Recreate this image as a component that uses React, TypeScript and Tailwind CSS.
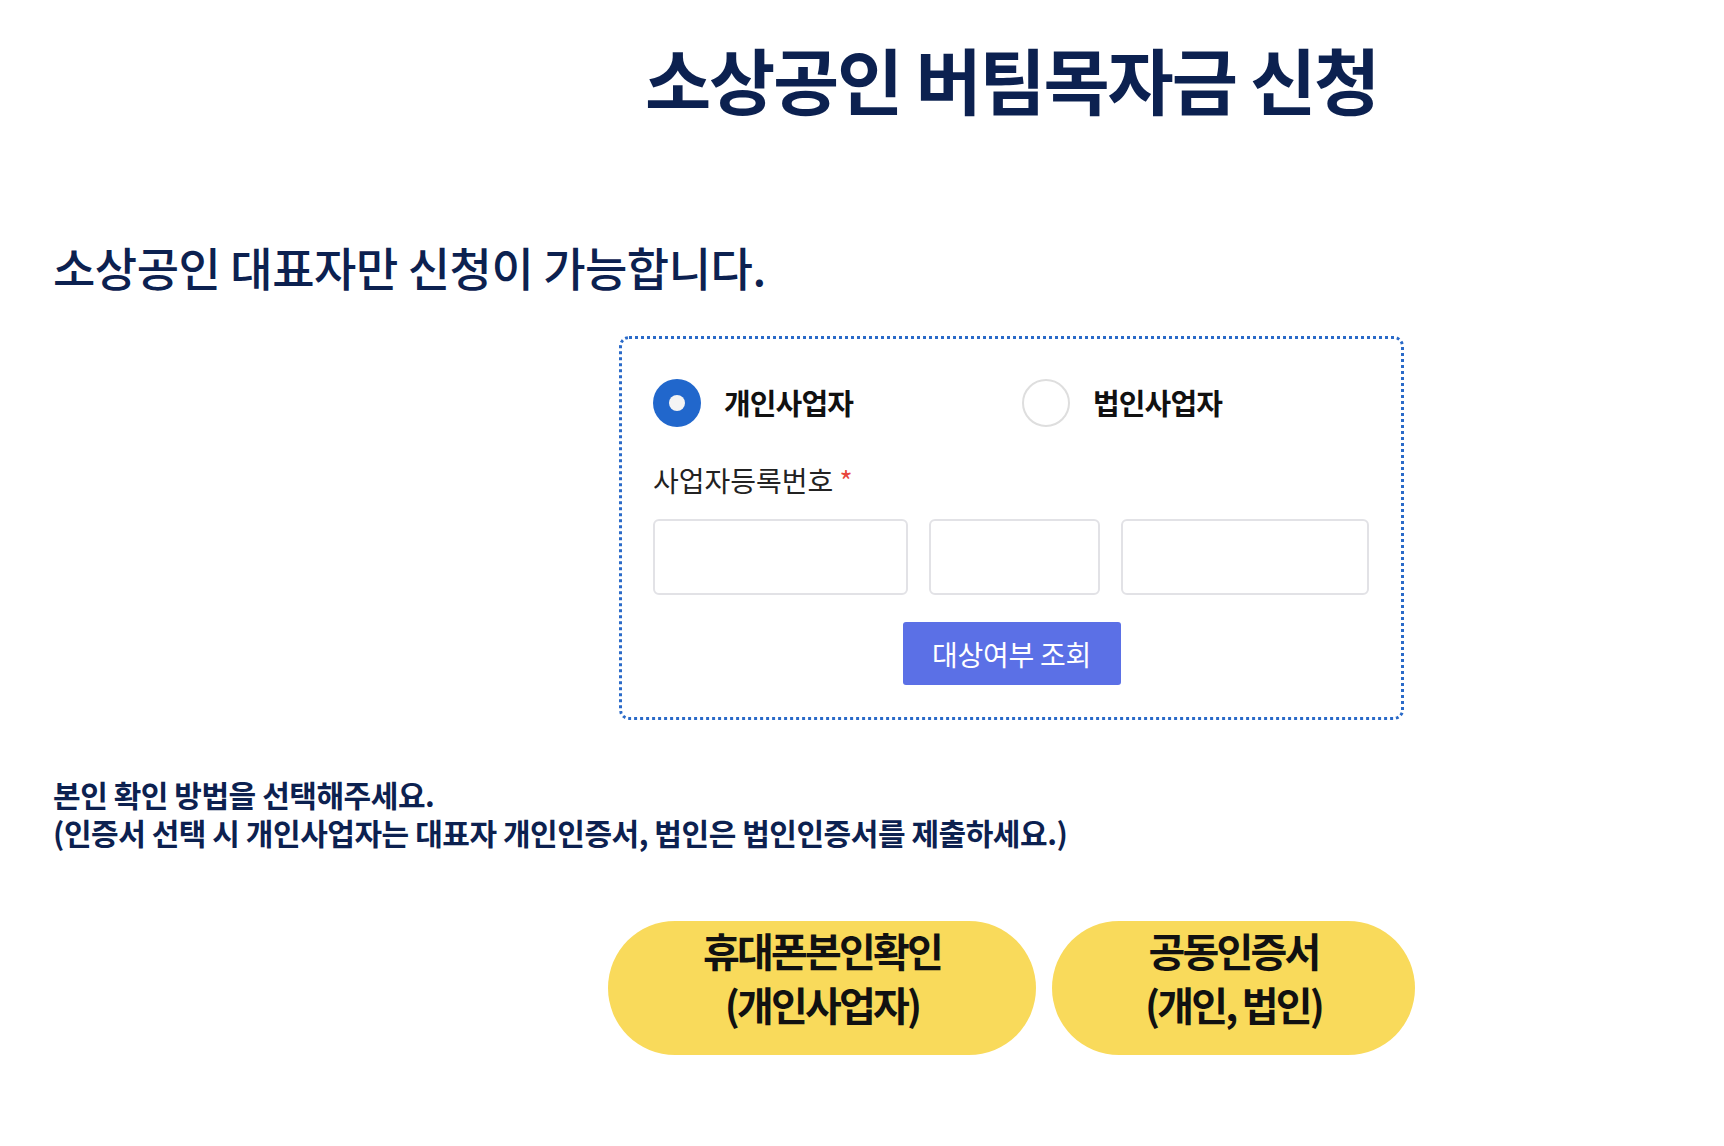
import React, { useState } from 'react';

const font = { fontFamily: '"Noto Sans CJK KR", "Noto Sans", sans-serif' };

const App: React.FC = () => {
  const [type, setType] = useState<'personal' | 'corp'>('personal');

  return (
    <div className="min-h-screen bg-white text-[#0c2150] pl-[53px]" style={font}>
      <div className="ml-[555px] w-[807px] pt-[38px]">
        <h1 className="text-center text-[72px] leading-[80px] font-bold tracking-[-0.03em]">
          소상공인 버팀목자금 신청
        </h1>
      </div>

      <p className="mt-[120px] text-[46px] leading-[56px] font-medium tracking-[-0.01em]">
        소상공인 대표자만 신청이 가능합니다.
      </p>

      <div className="ml-[566px] mt-[42px] w-[785px] rounded-[10px] border-[3px] border-dotted border-[#2a6ac8] px-[31px] pt-[40px] pb-[32px]">
        <div className="flex items-center">
          <button
            type="button"
            onClick={() => setType('personal')}
            className="flex w-[369px] items-center gap-[23px]"
          >
            {type === 'personal' ? (
              <span className="flex h-[48px] w-[48px] items-center justify-center rounded-full bg-[#2167cc]">
                <span className="h-[16px] w-[16px] rounded-full bg-[#f4f4f4]" />
              </span>
            ) : (
              <span className="h-[48px] w-[48px] rounded-full border-2 border-[#dedede]" />
            )}
            <span className="text-[29px] font-bold tracking-[-0.03em] text-[#111]">개인사업자</span>
          </button>
          <button
            type="button"
            onClick={() => setType('corp')}
            className="flex items-center gap-[23px]"
          >
            {type === 'corp' ? (
              <span className="flex h-[48px] w-[48px] items-center justify-center rounded-full bg-[#2167cc]">
                <span className="h-[16px] w-[16px] rounded-full bg-[#f4f4f4]" />
              </span>
            ) : (
              <span className="h-[48px] w-[48px] rounded-full border-2 border-[#dedede]" />
            )}
            <span className="text-[29px] font-bold tracking-[-0.03em] text-[#111]">법인사업자</span>
          </button>
        </div>

        <div className="mt-[35px] text-[28px] leading-[36px] text-[#222]">
          사업자등록번호 <span className="text-[#e8453c]">*</span>
        </div>

        <div className="mt-[21px] flex gap-[21px]">
          <input className="h-[76px] w-[255px] rounded-[6px] border-2 border-[#e2e2e6] outline-none" />
          <input className="h-[76px] w-[171px] rounded-[6px] border-2 border-[#e2e2e6] outline-none" />
          <input className="h-[76px] w-[248px] rounded-[6px] border-2 border-[#e2e2e6] outline-none" />
        </div>

        <div className="mt-[27px] flex justify-center">
          <button
            type="button"
            className="h-[63px] w-[218px] rounded-[3px] bg-[#5b70e6] text-[28px] tracking-[-0.01em] text-white"
          >
            대상여부 조회
          </button>
        </div>
      </div>

      <div className="mt-[55px] text-[30px] leading-[38px] font-bold tracking-[-0.015em]">
        <p>본인 확인 방법을 선택해주세요.</p>
        <p>(인증서 선택 시 개인사업자는 대표자 개인인증서, 법인은 법인인증서를 제출하세요.)</p>
      </div>

      <div className="ml-[555px] mt-[70px] flex gap-[16px] pb-[80px]">
        <button
          type="button"
          className="h-[134px] w-[428px] rounded-full bg-[#f9da5b] pb-[22px] text-[40px] leading-[54px] font-bold tracking-[-0.07em] text-[#111]"
        >
          휴대폰본인확인
          <br />
          (개인사업자)
        </button>
        <button
          type="button"
          className="h-[134px] w-[363px] rounded-full bg-[#f9da5b] pb-[22px] text-[40px] leading-[54px] font-bold tracking-[-0.07em] text-[#111]"
        >
          공동인증서
          <br />
          (개인, 법인)
        </button>
      </div>
    </div>
  );
};

export default App;
